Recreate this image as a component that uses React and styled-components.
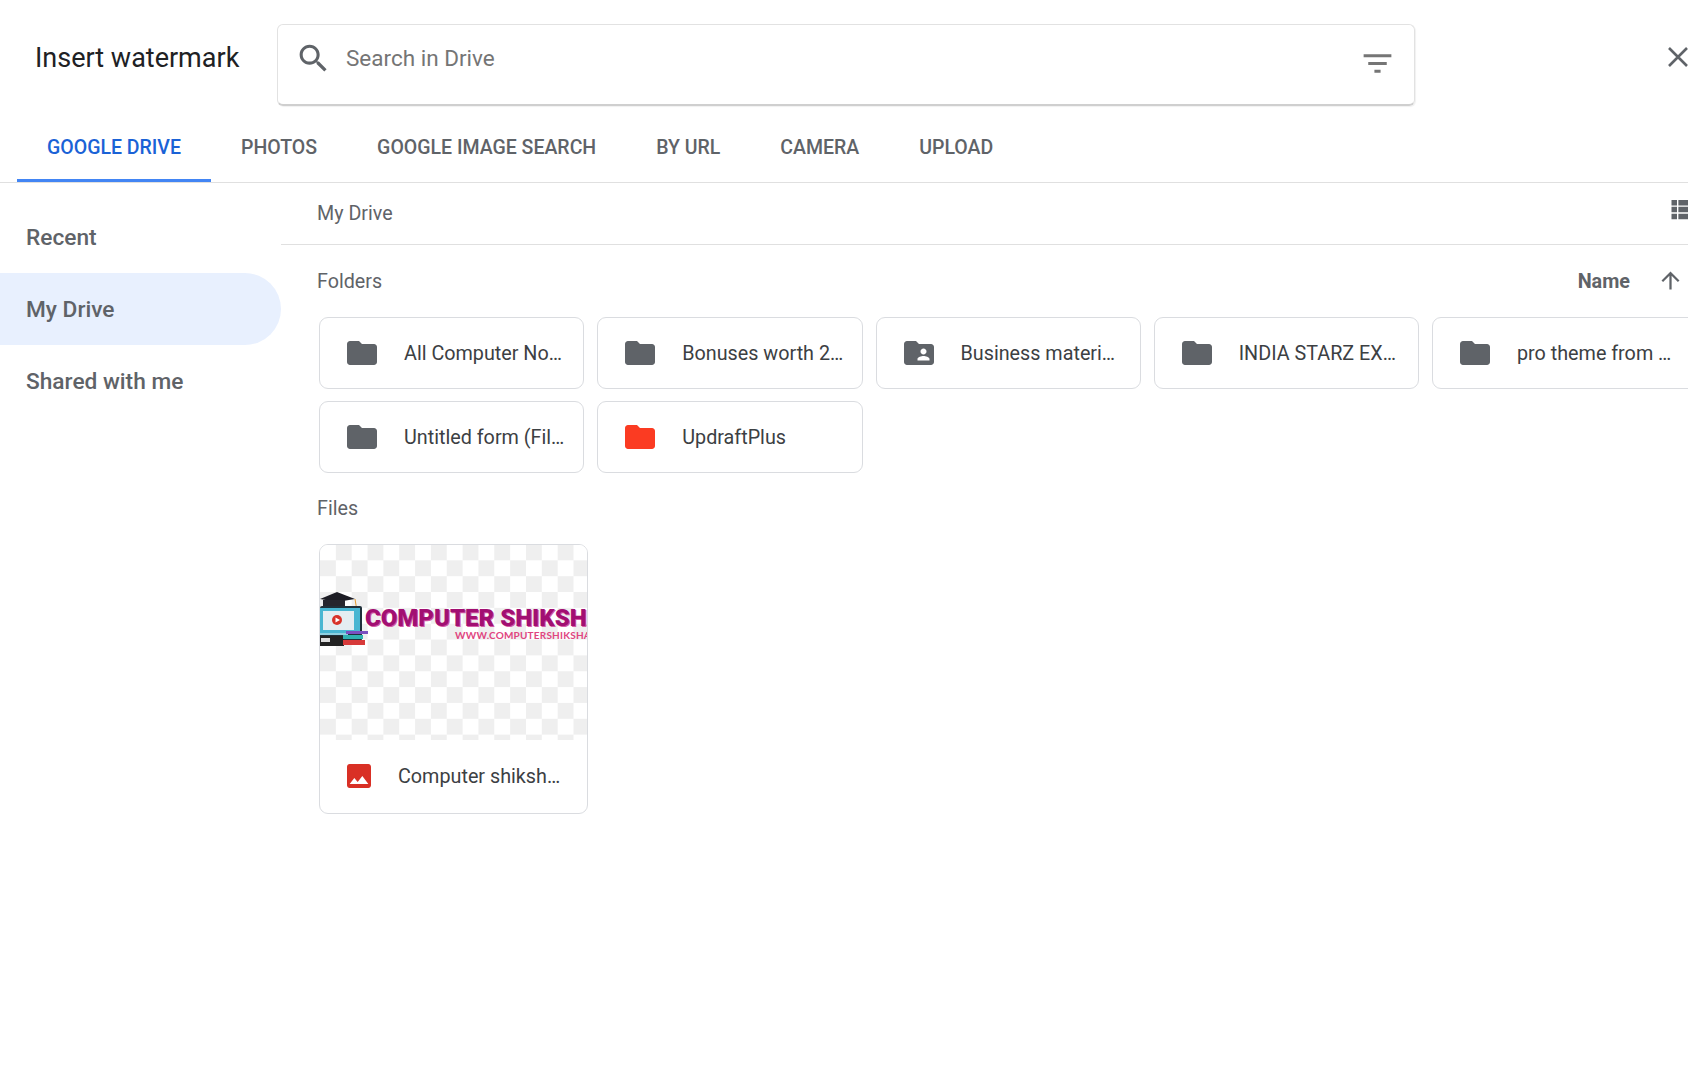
import React from "react";
import styled, { createGlobalStyle } from "styled-components";

const GlobalStyle = createGlobalStyle`
  html, body {
    margin: 0;
    padding: 0;
    background: #fff;
  }
  body {
    font-family: Roboto, "Liberation Sans", sans-serif;
    color: #5f6368;
  }
`;

const Page = styled.div`
  width: 1688px;
  height: 1079px;
  overflow: hidden;
  background: #fff;
`;

const Header = styled.div`
  display: flex;
  align-items: flex-start;
  padding-top: 24px;
`;

const Title = styled.div`
  width: 243px;
  padding-left: 35px;
  flex-shrink: 0;
  font-size: 27px;
  line-height: 68px;
  color: #202124;
`;

const SearchBox = styled.div`
  width: 1138px;
  height: 82px;
  margin-left: -1px;
  flex-shrink: 0;
  box-sizing: border-box;
  display: flex;
  align-items: flex-start;
  padding: 15px 18px 0 17px;
  border: 1px solid #e2e2e2;
  border-bottom: 2px solid #cfcfcf;
  border-radius: 6px;
  box-shadow: 1px 1px 1px rgba(0, 0, 0, 0.06);
`;

const SearchText = styled.div`
  flex: 1;
  margin-left: 14px;
  font-size: 22.5px;
  line-height: 37px;
  color: #757575;
`;

const FilterIcon = styled.svg`
  flex-shrink: 0;
  margin-top: 5px;
`;

const CloseButton = styled.div`
  margin: 23px 0 0 253px;
  width: 20px;
  height: 20px;
  flex-shrink: 0;
  color: #5f6368;
`;

const Tabs = styled.div`
  display: flex;
  margin-top: 6px;
  padding-left: 17px;
  height: 70px;
  border-bottom: 1px solid #e0e0e0;
`;

const Tab = styled.div`
  display: flex;
  align-items: center;
  padding: 0 30px;
  font-size: 19.5px;
  font-weight: 500;
  color: ${(props) => (props.$active ? "#1a62d6" : "#5f6368")};
  box-shadow: ${(props) => (props.$active ? "inset 0 -3px 0 #4285f4" : "none")};
`;

const Body = styled.div`
  display: flex;
`;

const Sidebar = styled.div`
  width: 281px;
  flex-shrink: 0;
  padding-top: 18px;
`;

const NavItem = styled.div`
  height: 72px;
  display: flex;
  align-items: center;
  padding-left: 26px;
  font-size: 22.7px;
  font-weight: 500;
  color: #5f6368;
  background: ${(props) => (props.$active ? "#e8f0fe" : "transparent")};
  border-radius: 0 36px 36px 0;
`;

const Main = styled.div`
  flex: 1;
  min-width: 0;
  overflow: hidden;
`;

const Breadcrumb = styled.div`
  box-sizing: border-box;
  height: 62px;
  display: flex;
  align-items: center;
  justify-content: space-between;
  padding: 0 0 1px 36px;
  border-bottom: 1px solid #e0e0e0;
  font-size: 19.7px;
  color: #5f6368;
`;

const ListIcon = styled.svg`
  align-self: flex-start;
  margin: 10px -11px 0 0;
  flex-shrink: 0;
`;

const SectionHead = styled.div`
  height: 72px;
  display: flex;
  align-items: center;
  justify-content: space-between;
  padding: 0 4px 0 36px;
  font-size: 19.7px;
  color: #5f6368;
`;

const Sort = styled.div`
  display: flex;
  align-items: center;
  gap: 27px;
  margin-top: 1px;
  font-weight: 700;
  font-size: 19.8px;
`;

const SortArrow = styled.svg`
  flex-shrink: 0;
  margin-top: -3px;
`;

const FolderGrid = styled.div`
  display: grid;
  grid-template-columns: repeat(5, 265.25px);
  grid-auto-rows: 71.5px;
  gap: 12.5px 13px;
  margin-left: 38px;
`;

const FolderCard = styled.div`
  box-sizing: border-box;
  display: flex;
  align-items: center;
  gap: 24px;
  padding-left: 24px;
  border: 1px solid #dadce0;
  border-radius: 9px;
  background: #fff;
`;

const Name = styled.div`
  margin-top: 1px;
  font-size: 19.75px;
  color: #3c4043;
  white-space: nowrap;
`;

const FileCard = styled.div`
  box-sizing: border-box;
  width: 269px;
  height: 270px;
  margin: -1px 0 0 38px;
  border: 1px solid #dadce0;
  border-radius: 9px;
  overflow: hidden;
`;

const Thumb = styled.div`
  height: 195px;
  overflow: hidden;
  padding-top: 45px;
  box-sizing: border-box;
  background-image: repeating-conic-gradient(
    #efefef 0deg 90deg,
    #fff 90deg 180deg
  );
  background-size: 31.7px 31.7px;
  background-position: 0 -0.5px;
`;

const Logo = styled.div`
  display: flex;
  align-items: flex-start;
`;

const LogoIcon = styled.svg`
  flex-shrink: 0;
`;

const LogoText = styled.div`
  margin-left: -3px;
  padding-top: 15px;
  white-space: nowrap;
`;

const LogoTitle = styled.div`
  font-family: Roboto, sans-serif;
  font-size: 24px;
  line-height: 26px;
  font-weight: 900;
  color: #a20f72;
  text-shadow: 1px 1px 0 #d45aa6;
`;

const LogoUrl = styled.div`
  margin: -2px 0 0 90px;
  font-family: Lato, sans-serif;
  font-size: 10px;
  line-height: 12px;
  font-weight: 700;
  letter-spacing: 0.2px;
  color: #e0457f;
`;

const FileFooter = styled.div`
  box-sizing: border-box;
  height: 73px;
  display: flex;
  align-items: center;
  gap: 23px;
  padding: 0 0 1px 23px;
`;

const folderPath =
  "M10 4H4c-1.1 0-1.99.9-1.99 2L2 18c0 1.1.9 2 2 2h16c1.1 0 2-.9 2-2V8c0-1.1-.9-2-2-2h-8l-2-2z";
const sharedPath =
  "M20 6h-8l-2-2H4c-1.1 0-1.99.9-1.99 2L2 18c0 1.1.9 2 2 2h16c1.1 0 2-.9 2-2V8c0-1.1-.9-2-2-2zm-5 3c1.1 0 2 .9 2 2s-.9 2-2 2-2-.9-2-2 .9-2 2-2zm4 8h-8v-1c0-1.33 2.67-2 4-2s4 .67 4 2v1z";

const Icon = ({ d, size, color = "#5f6368" }) => (
  <svg width={size} height={size} viewBox="0 0 24 24" fill={color} style={{ flexShrink: 0 }}>
    <path d={d} />
  </svg>
);

const folders = [
  { name: "All Computer No…" },
  { name: "Bonuses worth 2…" },
  { name: "Business materi…", shared: true },
  { name: "INDIA STARZ EX…" },
  { name: "pro theme from …" },
  { name: "Untitled form (Fil…" },
  { name: "UpdraftPlus", color: "#fb3b22" },
];

const tabs = ["GOOGLE DRIVE", "PHOTOS", "GOOGLE IMAGE SEARCH", "BY URL", "CAMERA", "UPLOAD"];

const LogoMark = () => (
  <LogoIcon width="48" height="56" viewBox="0 0 48 56">
    <path d="M0 9 L17 2 L35 9 L17 12 Z" fill="#1c1c24" />
    <rect x="3" y="10" width="22" height="7" fill="#26262e" />
    <path d="M35 9 L36.5 18" stroke="#e59a2c" strokeWidth="1" />
    <rect x="0" y="16" width="42" height="35" rx="2" fill="#20303a" />
    <rect x="0" y="18" width="40" height="25" fill="#49b6d2" />
    <rect x="3" y="21" width="31" height="19" fill="#e4edf2" />
    <circle cx="17" cy="30" r="5" fill="#d8322a" />
    <path d="M15.5 27.5 L20 30 L15.5 32.5 Z" fill="#fff" />
    <rect x="0" y="43" width="28" height="2" fill="#8fd0e0" />
    <rect x="0" y="46" width="24" height="10" fill="#222" />
    <rect x="1" y="48" width="9" height="4" fill="#ddd" />
    <rect x="26" y="41" width="22" height="3" fill="#7a4fc0" />
    <rect x="23" y="45" width="20" height="4" fill="#2fb1b0" />
    <rect x="23" y="50" width="22" height="5" fill="#d73a3a" />
  </LogoIcon>
);

const App = () => {
  return (
    <Page>
      <GlobalStyle />
      <Header>
        <Title>Insert watermark</Title>
        <SearchBox>
          <Icon
            size={37}
            color="#5f6368"
            d="M15.5 14h-.79l-.28-.27C15.41 12.59 16 11.11 16 9.5 16 5.91 13.09 3 9.5 3S3 5.91 3 9.5 5.91 16 9.5 16c1.61 0 3.09-.59 4.23-1.57l.27.28v.79l5 4.99L20.49 19l-4.99-5zm-6 0C7.01 14 5 11.99 5 9.5S7.01 5 9.5 5 14 7.01 14 9.5 11.99 14 9.5 14z"
          />
          <SearchText>Search in Drive</SearchText>
          <FilterIcon width="37" height="37" viewBox="0 0 24 24" fill="#757575">
            <path d="M10 18h4v-2h-4v2zM3 6v2h18V6H3zm3 7h12v-2H6v2z" />
          </FilterIcon>
        </SearchBox>
        <CloseButton>
          <svg width="20" height="20" viewBox="0 0 20 20">
            <path d="M1 1 L19 19 M19 1 L1 19" stroke="currentColor" strokeWidth="2.6" fill="none" />
          </svg>
        </CloseButton>
      </Header>

      <Tabs>
        {tabs.map((tab, i) => (
          <Tab key={tab} $active={i === 0}>
            {tab}
          </Tab>
        ))}
      </Tabs>

      <Body>
        <Sidebar>
          <NavItem>Recent</NavItem>
          <NavItem $active>My Drive</NavItem>
          <NavItem>Shared with me</NavItem>
        </Sidebar>

        <Main>
          <Breadcrumb>
            My Drive
            <ListIcon width="33" height="33" viewBox="0 0 24 24" fill="#5f6368">
              <path d="M4 14h4v-4H4v4zm0 5h4v-4H4v4zM4 9h4V5H4v4zm5 5h12v-4H9v4zm0 5h12v-4H9v4zM9 5v4h12V5H9z" />
            </ListIcon>
          </Breadcrumb>

          <SectionHead>
            Folders
            <Sort>
              Name
              <SortArrow width="27" height="27" viewBox="0 0 24 24" fill="#5f6368">
                <path d="M4 12l1.41 1.41L11 7.83V20h2V7.83l5.58 5.59L20 12l-8-8-8 8z" />
              </SortArrow>
            </Sort>
          </SectionHead>

          <FolderGrid>
            {folders.map((folder) => (
              <FolderCard key={folder.name}>
                <Icon
                  size={36}
                  color={folder.color || "#5f6368"}
                  d={folder.shared ? sharedPath : folderPath}
                />
                <Name>{folder.name}</Name>
              </FolderCard>
            ))}
          </FolderGrid>

          <SectionHead>Files</SectionHead>

          <FileCard>
            <Thumb>
              <Logo>
                <LogoMark />
                <LogoText>
                  <LogoTitle>COMPUTER SHIKSHA</LogoTitle>
                  <LogoUrl>WWW.COMPUTERSHIKSHA.COM</LogoUrl>
                </LogoText>
              </Logo>
            </Thumb>
            <FileFooter>
              <Icon
                size={32}
                color="#d93025"
                d="M21 19V5c0-1.1-.9-2-2-2H5c-1.1 0-2 .9-2 2v14c0 1.1.9 2 2 2h14c1.1 0 2-.9 2-2zM8.5 13.5l2.5 3.01L14.5 12l4.5 6H5l3.5-4.5z"
              />
              <Name>Computer shiksh…</Name>
            </FileFooter>
          </FileCard>
        </Main>
      </Body>
    </Page>
  );
};

export default App;
